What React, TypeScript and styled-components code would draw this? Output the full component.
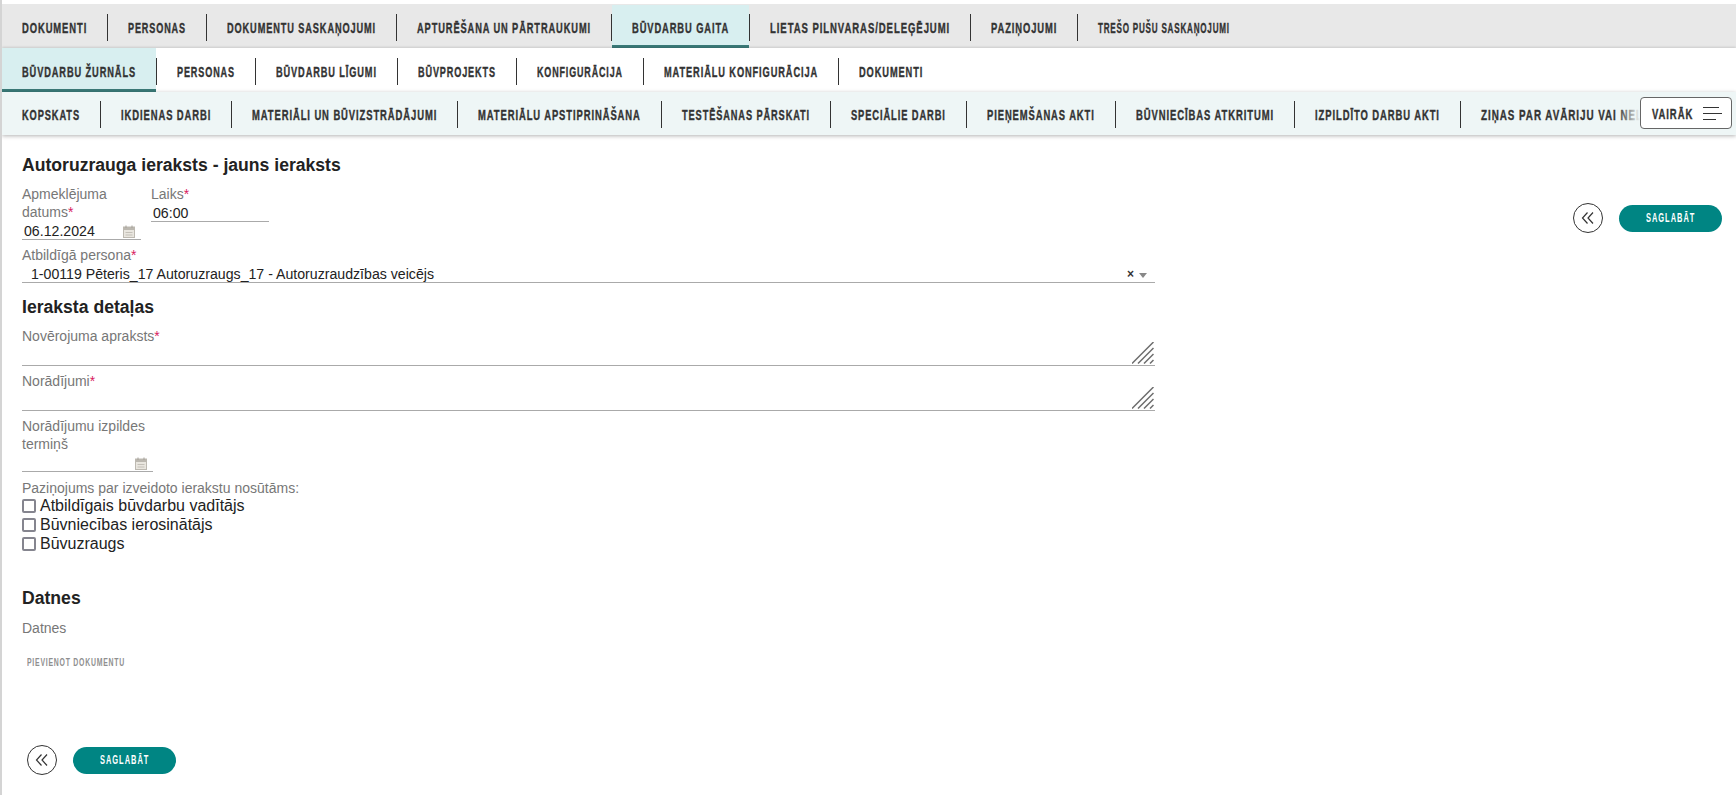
import React, { useLayoutEffect, useRef, useState } from "react";
import styled, { createGlobalStyle } from "styled-components";

const GlobalStyle = createGlobalStyle`
    html, body {
        margin: 0;
        padding: 0;
        background: white;
        overflow: hidden;
    }
`;

const Page = styled.div`
    height: 795px;
    border-left: 2px solid #d4d4d4;
    font-family: "Liberation Sans", Arial, sans-serif;
    color: #222;
    overflow: hidden;
`;

const MainTabs = styled.div`
    display: flex;
    height: 44px;
    margin-top: 4px;
    background: #e8e8e8;
`;

const SubTabs = styled.div`
    position: relative;
    display: flex;
    height: 44px;
    background: white;
    box-shadow: 0 -1px 2px rgb(0 0 0 / 0.12);
`;

const PageTabs = styled.div`
    position: relative;
    display: flex;
    height: 43px;
    background: #eef6f6;
    box-shadow: 0 1px 4px rgb(0 0 0 / 0.3);
    overflow: hidden;
`;

const Tab = styled.div<{ $active?: boolean; $inset?: boolean }>`
    display: flex;
    flex: none;
    align-items: center;
    margin-top: ${(p) => (p.$inset ? "1px" : "0")};
    padding: 3px 20px 0;
    font-weight: 700;
    font-size: 15.5px;
    letter-spacing: 1.5px;
    color: #333;
    -webkit-text-stroke: 0.4px #333;
    background: ${(p) => (p.$active ? "#d8eff0" : "transparent")};
    box-shadow: ${(p) => (p.$active ? "inset 0 -3px 0 #3a7a78" : "none")};
`;

const Divider = styled.div`
    flex: none;
    align-self: center;
    width: 1px;
    height: 27px;
    margin-top: 2px;
    background: #333;
`;

/* Box of a fixed width; the text inside is squeezed to fit it */
const SqueezeBox = styled.span<{ $width: number }>`
    display: block;
    flex: none;
    width: ${(p) => p.$width}px;
    white-space: nowrap;
`;

const SqueezeText = styled.span`
    display: inline-block;
    transform-origin: left center;
`;

const Fade = styled.div`
    position: absolute;
    top: 0;
    right: 0;
    width: 118px;
    height: 43px;
    background: linear-gradient(to right, rgb(238 246 246 / 0) 0, #eef6f6 22px);
`;

const MoreButton = styled.button`
    position: absolute;
    top: 5px;
    right: 4px;
    display: flex;
    align-items: center;
    justify-content: space-between;
    box-sizing: border-box;
    width: 92px;
    height: 32px;
    padding: 1px 9px 0 11px;
    background: white;
    border: 1px solid #666;
    border-radius: 4px;
    font-family: inherit;
    font-weight: 700;
    font-size: 15.5px;
    letter-spacing: 1.5px;
    color: #333;
    -webkit-text-stroke: 0.4px #333;
`;

const Body = styled.div`
    display: flex;
    justify-content: space-between;
    padding: 0 14px 0 20px;
`;

const FormColumn = styled.div`
    width: 1133px;
`;

const Title = styled.h1`
    margin: 18px 0 8px;
    font-size: 17.6px;
    line-height: 24px;
    font-weight: 700;
    color: #222;
`;

const FieldRow = styled.div`
    display: flex;
    align-items: flex-start;
    gap: 10px;
`;

const Field = styled.div<{ $width?: number; $gap?: number }>`
    width: ${(p) => (p.$width ? `${p.$width}px` : "100%")};
    margin-top: ${(p) => p.$gap ?? 0}px;
`;

const Label = styled.div`
    font-size: 14px;
    line-height: 18px;
    color: #777;

    & > b {
        font-weight: 400;
        color: #d81b60;
    }
`;

const Value = styled.div`
    display: flex;
    align-items: center;
    justify-content: space-between;
    box-sizing: border-box;
    height: 19px;
    padding: 2px 6px 0 2px;
    border-bottom: 1px solid #aaa;
    font-size: 14.15px;
    line-height: 17px;
    color: #222;
`;

const SelectValue = styled(Value)`
    padding: 2px 8px 0 9px;
`;

const SelectIcons = styled.span`
    display: flex;
    align-items: center;
    gap: 5px;
`;

const Clear = styled.span`
    font-size: 12px;
    font-weight: 700;
    line-height: 12px;
    color: #333;
`;

const Caret = styled.span`
    width: 0;
    height: 0;
    margin-top: 2px;
    border-left: 4px solid transparent;
    border-right: 4px solid transparent;
    border-top: 5px solid #888;
`;

const Section = styled.h2`
    margin: 13px 0 9px;
    font-size: 17.6px;
    line-height: 22px;
    font-weight: 700;
    color: #222;
`;

const TextArea = styled.div`
    position: relative;
    box-sizing: border-box;
    height: 21px;
    border-bottom: 1px solid #aaa;

    & > svg {
        position: absolute;
        right: 1px;
        bottom: 1px;
    }
`;

const NoticeLabel = styled(Label)`
    margin-top: 8px;
    line-height: 16px;
`;

const CheckRow = styled.label`
    display: flex;
    align-items: center;
    gap: 4px;
    height: 19px;
    font-size: 16px;
    color: #222;
`;

const Box = styled.span`
    flex: none;
    box-sizing: border-box;
    width: 14px;
    height: 14px;
    border: 2px solid #85858f;
    border-radius: 2px;
    background: white;
`;

const FilesTitle = styled(Section)`
    margin: 34px 0 10px;
`;

const AddDocument = styled.div`
    margin: 16px 0 0 5px;
    font-size: 11px;
    line-height: 18px;
    font-weight: 700;
    letter-spacing: 1.2px;
    color: #8f8f8f;
`;

const Actions = styled.div<{ $bottom?: boolean }>`
    display: flex;
    flex: none;
    align-items: center;
    gap: 16px;
    height: 30px;
    margin: ${(p) => (p.$bottom ? "74px 0 0 5px" : "68px 0 0")};
`;

const BackButton = styled.button`
    display: flex;
    align-items: center;
    justify-content: center;
    width: 30px;
    height: 30px;
    padding: 0;
    background: white;
    border: 1px solid #333;
    border-radius: 50%;
`;

const SaveButton = styled.button`
    display: flex;
    align-items: center;
    justify-content: center;
    width: 103px;
    height: 27px;
    padding: 0;
    border: none;
    border-radius: 14px;
    background: #008583;
    font-family: inherit;
    font-size: 12px;
    font-weight: 700;
    letter-spacing: 1.6px;
    color: white;
`;

const mainTabs = [
    { label: "DOKUMENTI", width: 65 },
    { label: "PERSONAS", width: 58 },
    { label: "DOKUMENTU SASKAŅOJUMI", width: 149 },
    { label: "APTURĒŠANA UN PĀRTRAUKUMI", width: 174 },
    { label: "BŪVDARBU GAITA", width: 97 },
    { label: "LIETAS PILNVARAS/DELEĢĒJUMI", width: 180 },
    { label: "PAZIŅOJUMI", width: 66 },
    { label: "TREŠO PUŠU SASKAŅOJUMI", width: 132 },
];

const subTabs = [
    { label: "BŪVDARBU ŽURNĀLS", width: 114 },
    { label: "PERSONAS", width: 58 },
    { label: "BŪVDARBU LĪGUMI", width: 101 },
    { label: "BŪVPROJEKTS", width: 78 },
    { label: "KONFIGURĀCIJA", width: 86 },
    { label: "MATERIĀLU KONFIGURĀCIJA", width: 154 },
    { label: "DOKUMENTI", width: 64 },
];

const pageTabs = [
    { label: "KOPSKATS", width: 58 },
    { label: "IKDIENAS DARBI", width: 90 },
    { label: "MATERIĀLI UN BŪVIZSTRĀDĀJUMI", width: 185 },
    { label: "MATERIĀLU APSTIPRINĀŠANA", width: 163 },
    { label: "TESTĒŠANAS PĀRSKATI", width: 128 },
    { label: "SPECIĀLIE DARBI", width: 95 },
    { label: "PIEŅEMŠANAS AKTI", width: 108 },
    { label: "BŪVNIECĪBAS ATKRITUMI", width: 138 },
    { label: "IZPILDĪTO DARBU AKTI", width: 125 },
    { label: "ZIŅAS PAR AVĀRIJU VAI NELAIMES GADĪJUMU", width: 262 },
];

const notify = ["Atbildīgais būvdarbu vadītājs", "Būvniecības ierosinātājs", "Būvuzraugs"];

function Squeezed({ width, children }: { width: number; children: string }) {
    const ref = useRef<HTMLSpanElement>(null);
    const [scale, setScale] = useState(0.7);

    useLayoutEffect(() => {
        if (ref.current) setScale(width / ref.current.offsetWidth);
    }, [width]);

    return (
        <SqueezeBox $width={width}>
            <SqueezeText ref={ref} style={{ transform: `scaleX(${scale})` }}>{children}</SqueezeText>
        </SqueezeBox>
    );
}

interface ITabListProps {
    items: { label: string; width: number }[];
    active?: string;
    inset?: boolean;
}

function TabList({ items, active, inset }: ITabListProps) {
    return (
        <>
            {items.map((item, i) => (
                <React.Fragment key={item.label}>
                    {i > 0 && <Divider />}
                    <Tab $active={item.label === active} $inset={inset && item.label === active}>
                        <Squeezed width={item.width}>{item.label}</Squeezed>
                    </Tab>
                </React.Fragment>
            ))}
        </>
    );
}

function CalendarIcon() {
    return (
        <svg width="12" height="13" viewBox="0 0 12 13">
            <rect x="0.5" y="2" width="11" height="10.5" fill="#e9e6df" stroke="#bdb9b1" />
            <rect x="0.5" y="2" width="11" height="3" fill="#bbb7af" />
            <path d="M3 0.5V3M9 0.5V3" stroke="#a5a199" />
            <path d="M2.5 7.5h7M2.5 10h7" stroke="#c4c0b8" />
        </svg>
    );
}

function ResizeHandle() {
    return (
        <svg width="22" height="22" viewBox="0 0 22 22">
            <path d="M0 21.5L21.5 0M6 21.5L21.5 6M12 21.5L21.5 12M18 21.5L21.5 18" stroke="#6e6e6e" strokeWidth="1.5" fill="none" />
        </svg>
    );
}

function BackIcon() {
    return (
        <svg width="14" height="14" viewBox="0 0 14 14">
            <path d="M6.5 1.5L1.5 7l5 5.5M12 1.5L7 7l5 5.5" stroke="#333" strokeWidth="1.2" fill="none" />
        </svg>
    );
}

function MenuIcon() {
    return (
        <svg width="19" height="13" viewBox="0 0 19 13">
            <path d="M0 .5h16M0 6.5h19M0 12.5h13" stroke="#333" strokeWidth="1.1" fill="none" />
        </svg>
    );
}

function FormActions({ bottom }: { bottom?: boolean }) {
    return (
        <Actions $bottom={bottom}>
            <BackButton><BackIcon /></BackButton>
            <SaveButton><Squeezed width={49}>SAGLABĀT</Squeezed></SaveButton>
        </Actions>
    );
}

export default function App() {
    return (
        <Page>
            <GlobalStyle />
            <MainTabs>
                <TabList items={mainTabs} active="BŪVDARBU GAITA" inset />
            </MainTabs>
            <SubTabs>
                <TabList items={subTabs} active="BŪVDARBU ŽURNĀLS" />
            </SubTabs>
            <PageTabs>
                <TabList items={pageTabs} />
                <Fade />
                <MoreButton><Squeezed width={41}>VAIRĀK</Squeezed><MenuIcon /></MoreButton>
            </PageTabs>
            <Body>
                <FormColumn>
                    <Title>Autoruzrauga ieraksts - jauns ieraksts</Title>
                    <FieldRow>
                        <Field $width={119}>
                            <Label>Apmeklējuma datums<b>*</b></Label>
                            <Value>06.12.2024 <CalendarIcon /></Value>
                        </Field>
                        <Field $width={118}>
                            <Label>Laiks<b>*</b></Label>
                            <Value>06:00</Value>
                        </Field>
                    </FieldRow>
                    <Field $gap={6}>
                        <Label>Atbildīgā persona<b>*</b></Label>
                        <SelectValue>
                            1-00119 Pēteris_17 Autoruzraugs_17 - Autoruzraudzības veicējs
                            <SelectIcons><Clear>×</Clear><Caret /></SelectIcons>
                        </SelectValue>
                    </Field>
                    <Section>Ieraksta detaļas</Section>
                    <Field>
                        <Label>Novērojuma apraksts<b>*</b></Label>
                        <TextArea><ResizeHandle /></TextArea>
                    </Field>
                    <Field $gap={6}>
                        <Label>Norādījumi<b>*</b></Label>
                        <TextArea><ResizeHandle /></TextArea>
                    </Field>
                    <Field $gap={6} $width={131}>
                        <Label>Norādījumu izpildes termiņš</Label>
                        <Value><span /><CalendarIcon /></Value>
                    </Field>
                    <NoticeLabel>Paziņojums par izveidoto ierakstu nosūtāms:</NoticeLabel>
                    {notify.map((item) => (
                        <CheckRow key={item}><Box />{item}</CheckRow>
                    ))}
                    <FilesTitle>Datnes</FilesTitle>
                    <Label>Datnes</Label>
                    <AddDocument><Squeezed width={98}>PIEVIENOT DOKUMENTU</Squeezed></AddDocument>
                    <FormActions bottom />
                </FormColumn>
                <FormActions />
            </Body>
        </Page>
    );
}
